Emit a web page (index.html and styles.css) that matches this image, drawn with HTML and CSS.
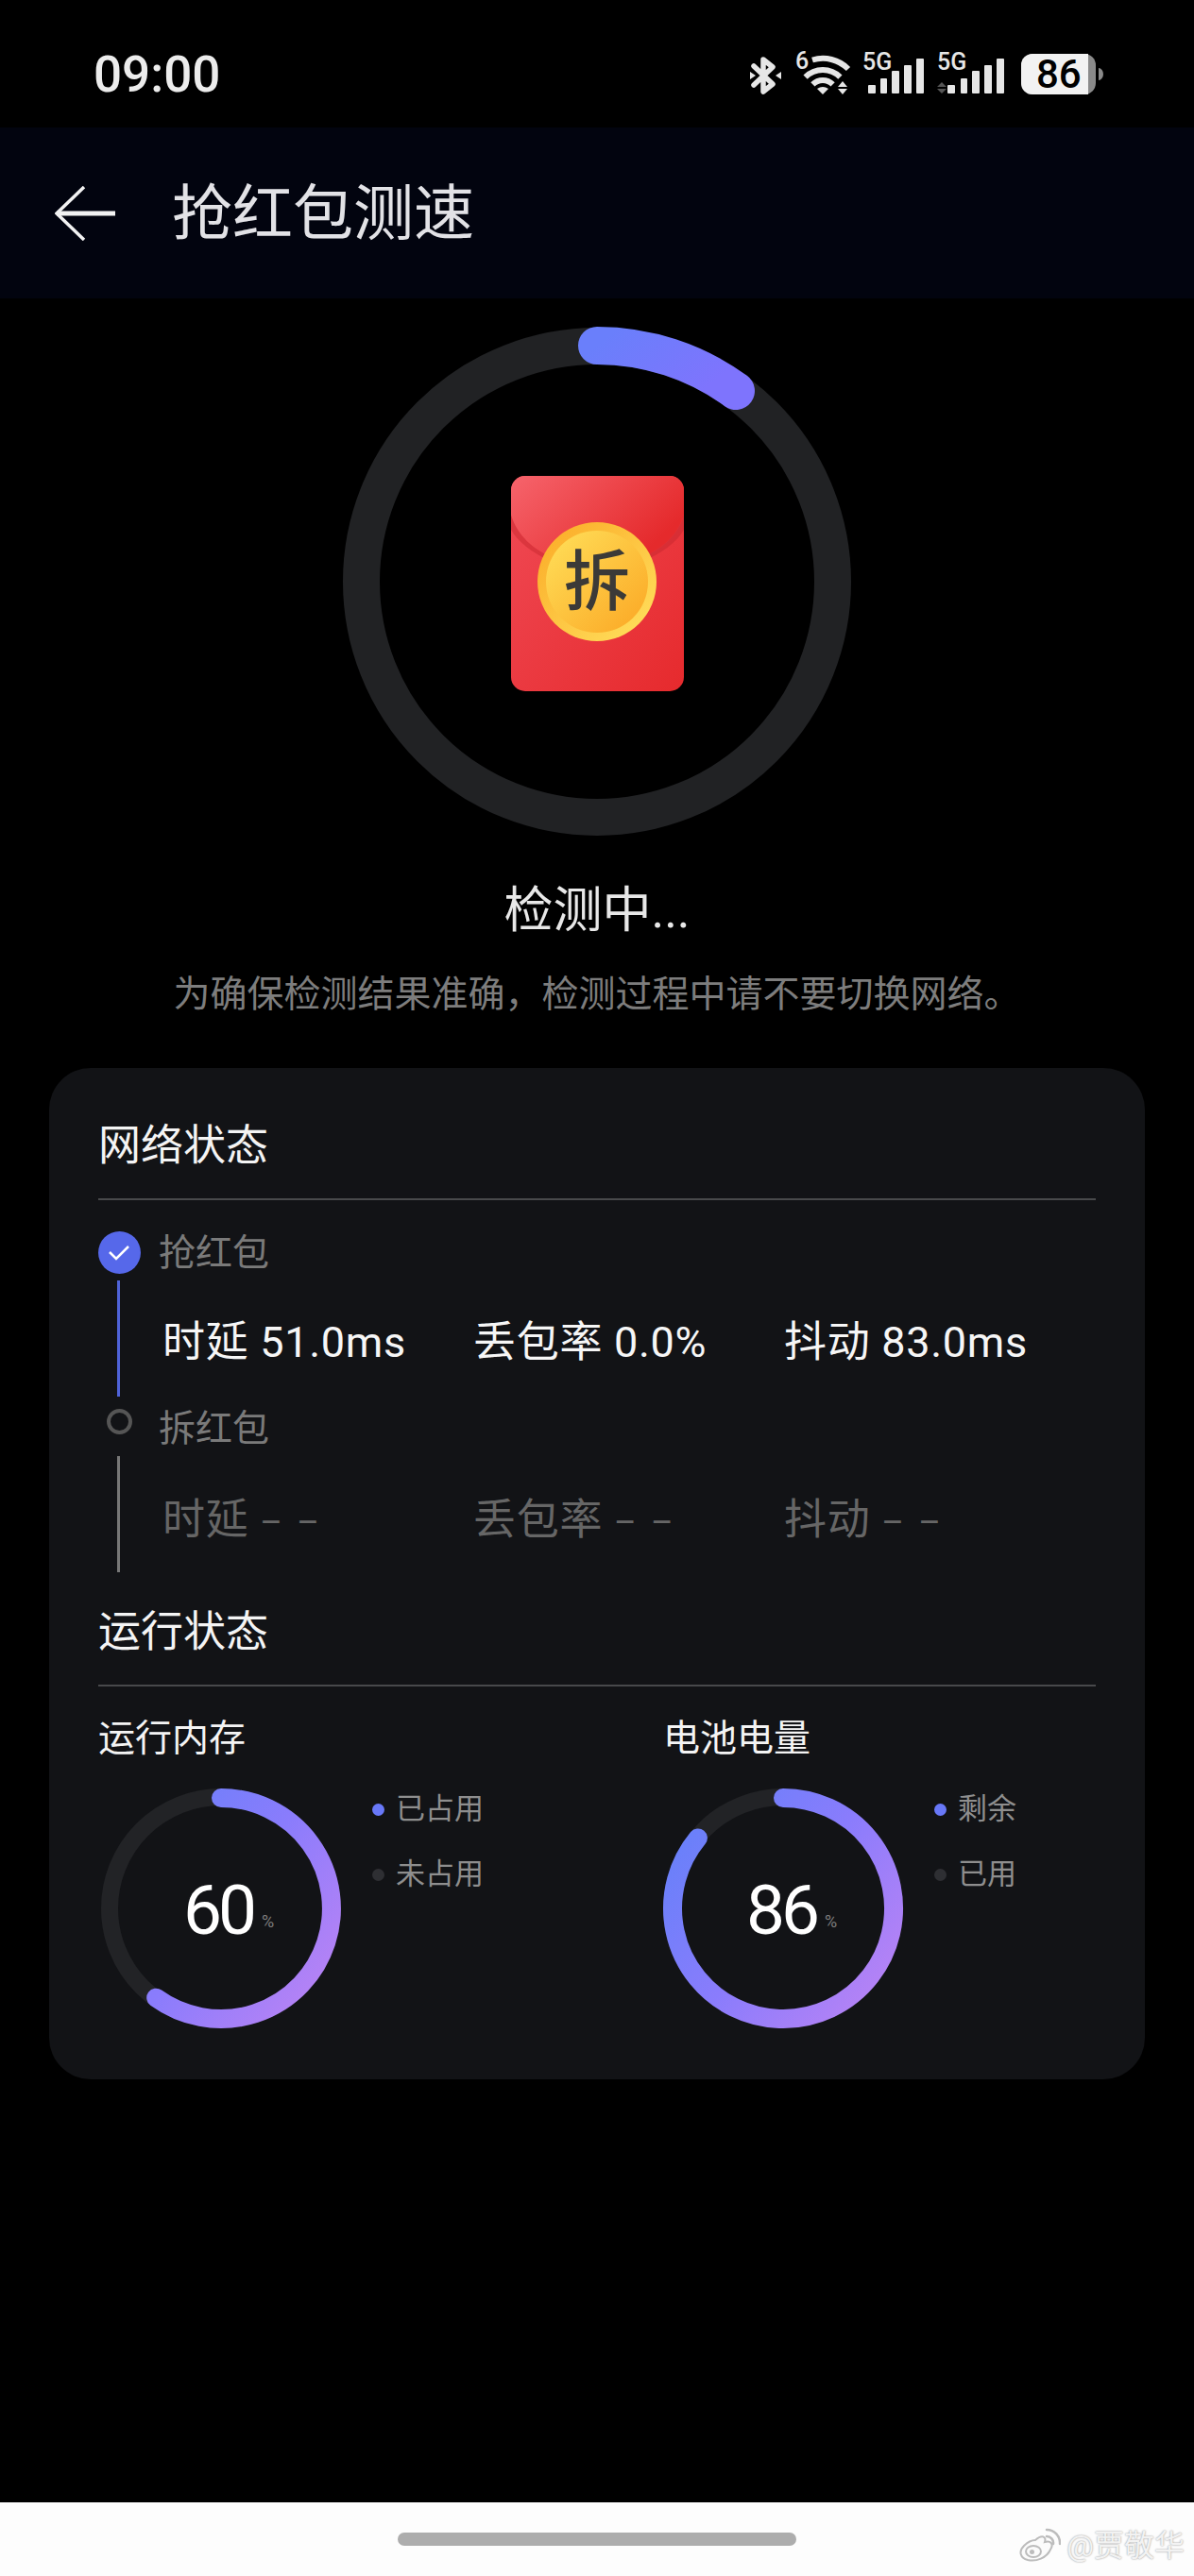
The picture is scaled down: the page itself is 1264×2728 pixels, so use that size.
FILE: index.html
```html
<!DOCTYPE html>
<html lang="zh-CN">
<head>
  <meta charset="UTF-8">
  <meta name="viewport" content="width=device-width, initial-scale=1.0">
  <title>抢红包测速</title>
  <link rel="stylesheet" href="styles.css">
</head>
<body>
  <div class="status-bar">
    <div class="clock">09:00</div>
    <div class="status-icons">
      <svg class="icon-bt" width="33" height="42" viewBox="0 0 33 42">
        <path d="M4 11 L24 30 L14 38 V4 L24 12 L4 31" fill="none" stroke="#e6e6e6" stroke-width="5.5" stroke-linejoin="round" stroke-linecap="round"/>
        <path d="M0 17 L6 21 L0 25 Z M33 17 L27 21 L33 25 Z" fill="#e6e6e6"/>
      </svg>
      <svg width="58" height="46" viewBox="0 0 58 46">
        <text class="icon-text" x="0" y="18">6</text>
        <g fill="none" stroke="#e6e6e6" stroke-width="6">
          <path d="M18 8.5 A38 38 0 0 1 56 18"/>
          <path d="M10.6 26.6 A26 26 0 0 1 47.4 26.6"/>
          <path d="M18.4 34.4 A15 15 0 0 1 39.6 34.4"/>
        </g>
        <path d="M23 39 Q29 35 35 39 L29 45 Z" fill="#e6e6e6"/>
        <path d="M50 31 L55 37 H45 Z M50 45 L55 39 H45 Z" fill="#e6e6e6"/>
      </svg>
      <svg class="icon-sim1" width="65" height="46" viewBox="0 0 65 46">
        <text class="icon-text" x="0" y="19">5G</text>
        <g fill="#e6e6e6">
          <rect x="6" y="35" width="8" height="9" rx="1"/>
          <rect x="19" y="28" width="7" height="16" rx="1"/>
          <rect x="31" y="20" width="8" height="24" rx="1"/>
          <rect x="44" y="14" width="8" height="30" rx="1"/>
          <rect x="57" y="7" width="8" height="37" rx="1"/>
        </g>
      </svg>
      <svg width="71" height="46" viewBox="0 0 71 46">
        <text class="icon-text" x="0" y="19">5G</text>
        <path d="M5 32 L10 37 H0 Z M5 44 L10 39 H0 Z" fill="#555"/>
        <g fill="#e6e6e6">
          <rect x="11" y="35" width="8" height="9" rx="1"/>
          <rect x="25" y="28" width="7" height="16" rx="1"/>
          <rect x="37" y="20" width="8" height="24" rx="1"/>
          <rect x="50" y="14" width="8" height="30" rx="1"/>
          <rect x="63" y="7" width="8" height="37" rx="1"/>
        </g>
      </svg>
      <svg class="icon-battery" width="87" height="46" viewBox="0 0 87 46">
        <rect x="0" y="2" width="79" height="43" rx="12" fill="#8a8a8a"/>
        <path d="M12 2 H71 V45 H12 A12 12 0 0 1 0 33 V14 A12 12 0 0 1 12 2 Z" fill="#f2f2f2"/>
        <path d="M82 17 A5 6.5 0 0 1 82 30 Z" fill="#8a8a8a"/>
        <text class="battery-text" x="16" y="38">86</text>
      </svg>
    </div>
  </div>

  <div class="app-bar">
    <svg width="64" height="58" viewBox="0 0 64 58">
      <path d="M31 1 L2 29 L31 57" fill="none" stroke="#f2f2f2" stroke-width="3.5"/>
      <path d="M2 29 H64" stroke="#f2f2f2" stroke-width="5"/>
    </svg>
    <h1>抢红包测速</h1>
  </div>

  <div class="hero">
    <svg width="540" height="540" viewBox="0 0 540 540">
      <defs>
        <linearGradient id="heroArc" x1="0" y1="0" x2="1" y2="0.4">
          <stop offset="0" stop-color="#6a7ffb"/>
          <stop offset="1" stop-color="#7e74fd"/>
        </linearGradient>
        <linearGradient id="packet" x1="0" y1="0" x2="1" y2="1">
          <stop offset="0" stop-color="#f04a55"/>
          <stop offset="1" stop-color="#e62a2d"/>
        </linearGradient>
        <linearGradient id="flap" x1="0" y1="0" x2="1" y2="0.5">
          <stop offset="0" stop-color="#f6646c"/>
          <stop offset="1" stop-color="#e52a2c"/>
        </linearGradient>
        <linearGradient id="coinRim" x1="0" y1="0" x2="1" y2="1">
          <stop offset="0" stop-color="#fba925"/>
          <stop offset="1" stop-color="#ffe25f"/>
        </linearGradient>
        <linearGradient id="coinFace" x1="0" y1="0" x2="1" y2="1">
          <stop offset="0" stop-color="#ffe05a"/>
          <stop offset="1" stop-color="#fba623"/>
        </linearGradient>
      </defs>
      <circle cx="270" cy="270" r="249.5" fill="none" stroke="#212224" stroke-width="39"/>
      <path d="M270 20 A250 250 0 0 1 417 68" fill="none" stroke="url(#heroArc)" stroke-width="40" stroke-linecap="round"/>
      <rect x="179" y="158" width="183" height="228" rx="15" fill="url(#packet)"/>
      <path d="M179 199 C186 222 203 235 220 243 H320 C338 235 355 222 362 199 V215 C355 228 338 240 320 248 H220 C203 240 186 228 179 215 Z" fill="#c4252d" opacity="0.45"/>
      <path d="M179 173 A15 15 0 0 1 194 158 H347 A15 15 0 0 1 362 173 V199 C355 222 338 235 320 243 H220 C203 235 186 222 179 199 Z" fill="url(#flap)"/>
      <circle cx="270" cy="270" r="63" fill="url(#coinRim)"/>
      <circle cx="270" cy="270" r="54" fill="url(#coinFace)"/>
      <text class="coin-text" x="270" y="295">拆</text>
    </svg>
  </div>
  <div class="hero-title">检测中...</div>
  <div class="hero-tip">为确保检测结果准确，检测过程中请不要切换网络。</div>

  <div class="card">
    <div class="section-title">网络状态</div>
    <div class="divider"></div>

    <div class="steps">
      <div class="step-head">
        <span class="step-dot">
          <svg width="45" height="45" viewBox="0 0 45 45">
            <circle cx="22.5" cy="22.5" r="22.5" fill="#5668ea"/>
            <path d="M12 22 L19 29 L32 16" fill="none" stroke="#fff" stroke-width="2.5"/>
          </svg>
        </span>
        <span class="step-label">抢红包</span>
      </div>
      <div class="step-body">
        <div class="step-line line-done"></div>
        <div class="metrics">
          <span>时延 51.0ms</span>
          <span>丢包率 0.0%</span>
          <span>抖动 83.0ms</span>
        </div>
      </div>

      <div class="step-head step-next">
        <span class="step-dot">
          <span class="ring-dot"></span>
        </span>
        <span class="step-label">拆红包</span>
      </div>
      <div class="step-body">
        <div class="step-line"></div>
        <div class="metrics metrics-empty">
          <span>时延 <span class="dash">– –</span></span>
          <span>丢包率 <span class="dash">– –</span></span>
          <span>抖动 <span class="dash">– –</span></span>
        </div>
      </div>
    </div>

    <div class="section-title section-run">运行状态</div>
    <div class="divider"></div>

    <div class="gauges">
      <div class="gauge">
        <div class="gauge-title">运行内存</div>
        <div class="gauge-row">
          <svg width="260" height="260" viewBox="0 0 260 260">
            <defs>
              <linearGradient id="gaugeArc" gradientUnits="userSpaceOnUse" x1="30" y1="55" x2="230" y2="205">
                <stop offset="0" stop-color="#6b80fa"/>
                <stop offset="0.5" stop-color="#8a7cfc"/>
                <stop offset="1" stop-color="#b282f6"/>
              </linearGradient>
            </defs>
            <circle cx="130" cy="130" r="118" fill="none" stroke="#222326" stroke-width="18"/>
            <path class="gauge-arc" d="M130 13 A117 117 0 1 1 61.2 224.7"/>
            <text class="gauge-value" x="90" y="157">60</text>
            <text class="gauge-unit" x="173" y="150">%</text>
          </svg>
          <div class="legend">
            <div class="legend-item"><span class="legend-dot dot-on"></span>已占用</div>
            <div class="legend-item"><span class="legend-dot"></span>未占用</div>
          </div>
        </div>
      </div>
      <div class="gauge gauge-battery">
        <div class="gauge-title">电池电量</div>
        <div class="gauge-row">
          <svg width="260" height="260" viewBox="0 0 260 260">
            <circle cx="130" cy="130" r="118" fill="none" stroke="#222326" stroke-width="18"/>
            <path class="gauge-arc" d="M130 13 A117 117 0 1 1 39.9 55.4"/>
            <text class="gauge-value" x="91" y="157">86</text>
            <text class="gauge-unit" x="174" y="150">%</text>
          </svg>
          <div class="legend">
            <div class="legend-item"><span class="legend-dot dot-on"></span>剩余</div>
            <div class="legend-item"><span class="legend-dot"></span>已用</div>
          </div>
        </div>
      </div>
    </div>
  </div>

  <div class="spacer"></div>

  <div class="nav-bar">
    <div class="home-pill"></div>
    <div class="watermark">
      <svg width="44" height="38" viewBox="0 0 44 38">
        <path d="M17 13 C24 7 29 9 27 15 C33 13 37 17 33 23 C29 32 18 36 9 34 C1 32 -1 25 5 19 C9 15 13 13 17 13 Z" fill="#fbfbfb" stroke="#bcbcbc" stroke-width="2"/>
        <ellipse cx="15" cy="25" rx="8" ry="6" fill="none" stroke="#bcbcbc" stroke-width="2"/>
        <circle cx="13.5" cy="25.5" r="2.5" fill="#bcbcbc"/>
        <path d="M29 9 A7 7 0 0 1 36 17 M29 2 A14 14 0 0 1 43 17" fill="none" stroke="#bcbcbc" stroke-width="2.5" stroke-linecap="round"/>
      </svg>
      <span>@贾敬华</span>
    </div>
  </div>
</body>
</html>
```

FILE: styles.css
```css
* {
  box-sizing: border-box;
}

body {
  margin: 0;
  width: 1264px;
  height: 2728px;
  display: flex;
  flex-direction: column;
  background-color: #000;
  color: #fff;
  font-family: Roboto, "Noto Sans CJK SC", sans-serif;
  overflow: hidden;
}

/* status bar */
.status-bar {
  height: 135px;
  padding: 55px 96px 0 99px;
  display: flex;
  justify-content: space-between;
  align-items: flex-start;
}

.clock {
  font-size: 53px;
  line-height: 48px;
  font-weight: 500;
  color: #ececec;
}

.status-icons {
  display: flex;
  align-items: flex-start;
  gap: 14px;
}

.status-icons svg {
  overflow: visible;
}

.icon-bt {
  margin-top: 4px;
  margin-right: 1px;
}

.icon-sim1 {
  margin-left: -1px;
}

.icon-battery {
  margin-left: 4px;
}

.icon-text {
  font-size: 25px;
  font-weight: 500;
  fill: #e6e6e6;
}

.battery-text {
  font-size: 42px;
  font-weight: 500;
  fill: #000;
}

/* header */
.app-bar {
  height: 181px;
  padding-left: 58px;
  display: flex;
  align-items: center;
  gap: 60px;
  background-color: #02040f;
}

.app-bar h1 {
  margin: 0;
  padding-top: 3px;
  font-size: 64px;
  font-weight: 400;
  line-height: 80px;
  color: #e2e2e6;
}

/* big ring */
.hero {
  margin-top: 30px;
  display: flex;
  justify-content: center;
}

.coin-text {
  font-size: 70px;
  font-weight: 500;
  text-anchor: middle;
  fill: #3b3a38;
}

.hero-title {
  margin-top: 44px;
  font-size: 52px;
  line-height: 70px;
  text-align: center;
  color: #e8e8e8;
}

.hero-tip {
  margin-top: 28px;
  font-size: 39px;
  line-height: 50px;
  text-align: center;
  color: #7d7d7d;
}

/* card */
.card {
  margin: 53px 52px 0;
  height: 1071px;
  padding: 53px 52px 0;
  border-radius: 44px;
  background-color: #121316;
}

.section-title {
  font-size: 45px;
  line-height: 60px;
  color: #f4f4f4;
}

.section-run {
  margin-top: 34px;
}

.divider {
  margin-top: 25px;
  height: 2px;
  background-color: #48494b;
}

.steps {
  margin-top: 33px;
}

.step-head {
  height: 45px;
  display: flex;
  align-items: center;
  gap: 19px;
}

.step-next {
  margin-top: 11px;
}

.step-dot {
  width: 45px;
  height: 45px;
  display: flex;
  justify-content: center;
}

.ring-dot {
  margin-top: 2px;
  width: 27px;
  height: 27px;
  border: 4px solid #555;
  border-radius: 50%;
}

.step-label {
  padding-top: 2px;
  font-size: 39px;
  line-height: 45px;
  color: #7a7a7a;
}

.step-body {
  margin-top: 7px;
  height: 123px;
  display: flex;
}

.step-line {
  margin-left: 20px;
  width: 3px;
  background-color: #777;
}

.line-done {
  background-color: #4f63d9;
}

.metrics {
  margin-left: 45px;
  flex: 1;
  display: grid;
  grid-template-columns: 329px 329px 1fr;
  align-items: center;
  font-size: 45px;
  letter-spacing: 0.7px;
  color: #f6f6f6;
}

.metrics-empty {
  padding-top: 3px;
  color: #666;
}

.dash {
  font-size: 36px;
  word-spacing: 5px;
}

/* gauges */
.gauges {
  margin-top: 33px;
  display: grid;
  grid-template-columns: 595px 1fr;
}

.gauge-title {
  font-size: 39px;
  line-height: 44px;
  color: #f4f4f4;
}

.gauge-battery .gauge-title {
  padding-left: 3px;
}

.gauge-row {
  margin-top: 28px;
  display: flex;
  align-items: flex-start;
  gap: 30px;
}

.gauge-arc {
  fill: none;
  stroke: url(#gaugeArc);
  stroke-width: 20;
  stroke-linecap: round;
}

.gauge-value {
  font-size: 73px;
  letter-spacing: -4px;
  fill: #fff;
}

.gauge-unit {
  font-size: 18px;
  fill: #7e7e7e;
}

.legend {
  padding-top: 5px;
  display: flex;
  flex-direction: column;
  gap: 29px;
}

.legend-item {
  display: flex;
  align-items: center;
  gap: 12px;
  font-size: 31px;
  line-height: 40px;
  color: #8e8e8e;
}

.legend-dot {
  width: 13px;
  height: 13px;
  border-radius: 50%;
  background-color: #2e2f33;
}

.dot-on {
  background-color: #6878f8;
}

.spacer {
  flex: 1;
}

/* bottom bar */
.nav-bar {
  position: relative;
  height: 78px;
  display: flex;
  justify-content: center;
  align-items: center;
  background-color: #fdfdfd;
}

.home-pill {
  width: 422px;
  height: 14px;
  border-radius: 7px;
  background-color: #adadad;
}

.watermark {
  position: absolute;
  right: 10px;
  top: 26px;
  display: flex;
  align-items: center;
  gap: 6px;
  font-size: 32px;
  line-height: 40px;
  color: #f2f2f2;
  text-shadow: 0 0 2px #8a8a8a;
}
```
